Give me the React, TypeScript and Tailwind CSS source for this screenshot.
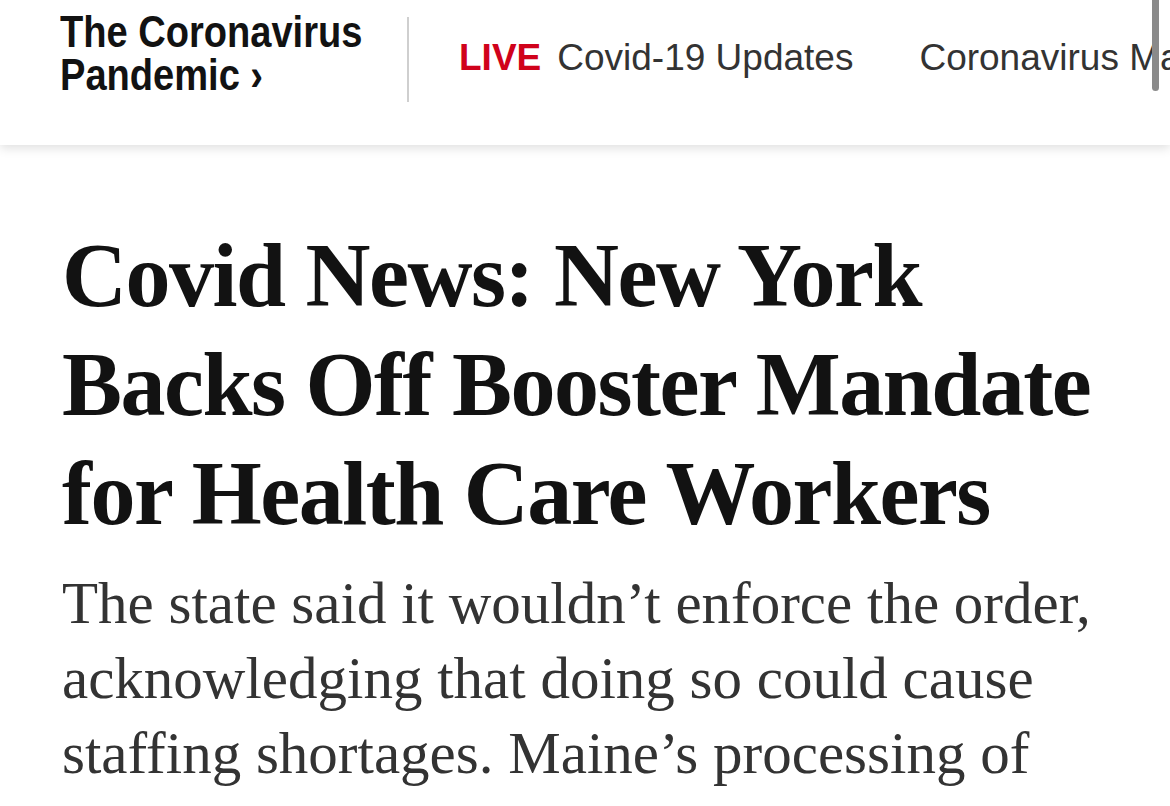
import React from "react";

export default function App() {
  return (
    <div className="relative w-[1170px] h-[806px] overflow-hidden bg-white">
      <header className="relative z-10 h-[145px] bg-white shadow-[0_3px_10px_rgba(0,0,0,0.13)] flex items-start pl-[60px] overflow-hidden">
        <div className="mt-[10px] w-[302px] shrink-0">
          <div
            className="origin-left scale-x-[0.865] text-[44px] leading-[43px] font-bold text-[#121212] whitespace-nowrap"
            style={{ fontFamily: '"Liberation Sans", Arial, sans-serif' }}
          >
            <div>The Coronavirus</div>
            <div>Pandemic ›</div>
          </div>
        </div>
        <div className="ml-[45px] mt-[17px] w-[2px] h-[85px] bg-[#cfcfcf] shrink-0" />
        <nav
          className="ml-[50px] mt-[34px] flex items-baseline whitespace-nowrap text-[37px] leading-[48px] text-[#333]"
          style={{ fontFamily: '"Liberation Sans", Arial, sans-serif' }}
        >
          <span className="font-bold text-[#d0021b]">LIVE</span>
          <span className="ml-[16px]">Covid-19 Updates</span>
          <span className="ml-[66px]">Coronavirus Maps</span>
        </nav>
      </header>
      <div className="absolute right-[11px] top-0 w-[7px] h-[91px] rounded-b-full bg-[#8a8a8a] z-20" />
      <main className="pl-[62px] pt-[76px]">
        <h1
          className="text-[90px] leading-[109px] font-bold tracking-[-1.5px] text-[#121212] whitespace-nowrap"
          style={{ fontFamily: '"Liberation Serif", "Times New Roman", serif' }}
        >
          <div>Covid News: New York</div>
          <div>Backs Off Booster Mandate</div>
          <div>for Health Care Workers</div>
        </h1>
        <p
          className="mt-[18px] text-[59px] leading-[75px] text-[#333] whitespace-nowrap"
          style={{ fontFamily: '"Liberation Serif", "Times New Roman", serif' }}
        >
          <span className="block">The state said it wouldn’t enforce the order,</span>
          <span className="block">acknowledging that doing so could cause</span>
          <span className="block">staffing shortages. Maine’s processing of</span>
        </p>
      </main>
    </div>
  );
}
